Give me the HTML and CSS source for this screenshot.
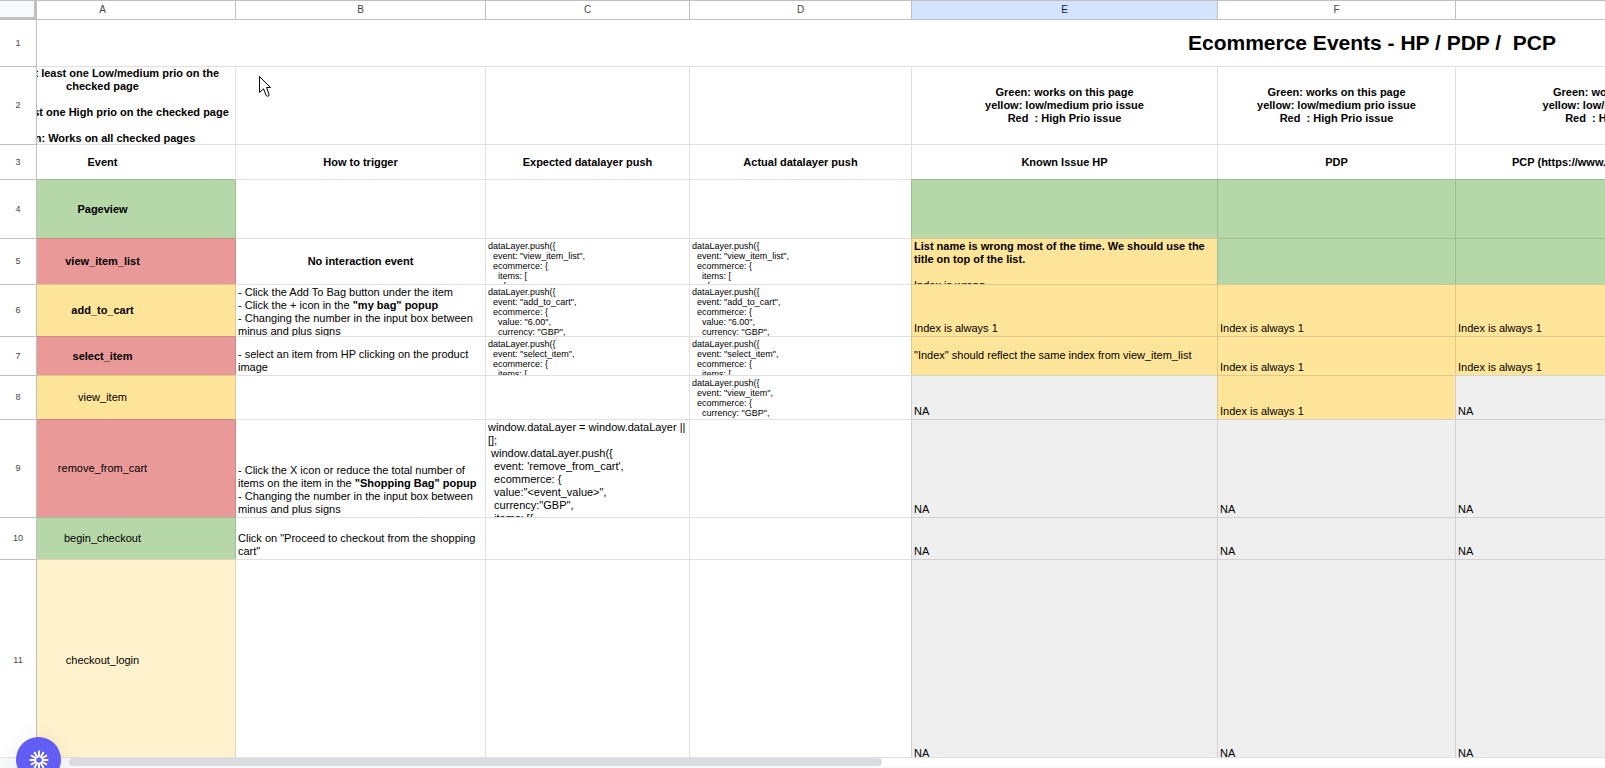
FILE: index.html
```html
<!DOCTYPE html>
<html lang="en">
<head>
<meta charset="utf-8">
<title>Ecommerce Events</title>
<link rel="stylesheet" href="styles.css">
</head>
<body>
<main class="app">
  <div class="viewport">
    <table class="sheet">
      <colgroup>
        <col class="w-num"><col class="w-a"><col class="w-b"><col class="w-c"><col class="w-d"><col class="w-e"><col class="w-f"><col>
      </colgroup>
      <thead>
        <tr>
          <td class="corner"></td>
          <th scope="col"><div class="cell scrolled">A</div></th>
          <th scope="col"><div class="cell">B</div></th>
          <th scope="col"><div class="cell">C</div></th>
          <th scope="col"><div class="cell">D</div></th>
          <th scope="col" class="selected"><div class="cell">E</div></th>
          <th scope="col"><div class="cell">F</div></th>
          <th scope="col"></th>
        </tr>
      </thead>
      <tbody>
        <tr class="r1">
          <th scope="row">1</th>
          <td colspan="7"><div class="cell merged title">Ecommerce Events - HP / PDP / &nbsp;PCP</div></td>
        </tr>
        <tr class="r2">
          <th scope="row">2</th>
          <td><div class="cell scrolled center bold">Yellow: At least one Low/medium prio on the<br>checked page<br><br>Red: At least one High prio on the checked page<br><br>Green: Works on all checked pages</div></td>
          <td></td><td></td><td></td>
          <td><div class="cell center bold">Green: works on this page<br>yellow: low/medium prio issue<br>Red &nbsp;: High Prio issue</div></td>
          <td><div class="cell center bold">Green: works on this page<br>yellow: low/medium prio issue<br>Red &nbsp;: High Prio issue</div></td>
          <td><div class="cell wide center bold">Green: works on this page<br>yellow: low/medium prio issue<br>Red &nbsp;: High Prio issue</div></td>
        </tr>
        <tr class="r3">
          <th scope="row">3</th>
          <td><div class="cell scrolled center bold">Event</div></td>
          <td><div class="cell center bold">How to trigger</div></td>
          <td><div class="cell center bold">Expected datalayer push</div></td>
          <td><div class="cell center bold">Actual datalayer push</div></td>
          <td><div class="cell center bold">Known Issue HP</div></td>
          <td><div class="cell center bold">PDP</div></td>
          <td><div class="cell from-left bold">PCP (https://www.</div></td>
        </tr>
        <tr class="r4">
          <th scope="row">4</th>
          <td class="green"><div class="cell scrolled center bold">Pageview</div></td>
          <td class="by-green"></td><td></td><td></td>
          <td class="green"></td><td class="green"></td><td class="green"></td>
        </tr>
        <tr class="r5">
          <th scope="row">5</th>
          <td class="red"><div class="cell scrolled center bold">view_item_list</div></td>
          <td class="by-red"><div class="cell center bold">No interaction event</div></td>
          <td><pre class="cell top code">dataLayer.push({
  event: "view_item_list",
  ecommerce: {
    items: [
      {</pre></td>
          <td><pre class="cell top code">dataLayer.push({
  event: "view_item_list",
  ecommerce: {
    items: [
      {</pre></td>
          <td class="yellow"><div class="cell top"><div><b>List name is wrong most of the time. We should use the title on top of the list.</b><br><br>Index is wrong</div></div></td>
          <td class="green"></td><td class="green"></td>
        </tr>
        <tr class="r6">
          <th scope="row">6</th>
          <td class="yellow"><div class="cell scrolled center bold">add_to_cart</div></td>
          <td class="by-yellow"><div class="cell top"><div>- Click the Add To Bag button under the item<br>- Click the + icon in the <b>"my bag" popup</b><br>- Changing the number in the input box between minus and plus signs</div></div></td>
          <td><pre class="cell top code">dataLayer.push({
  event: "add_to_cart",
  ecommerce: {
    value: "6.00",
    currency: "GBP",</pre></td>
          <td><pre class="cell top code">dataLayer.push({
  event: "add_to_cart",
  ecommerce: {
    value: "6.00",
    currency: "GBP",</pre></td>
          <td class="yellow"><div class="cell">Index is always 1</div></td>
          <td class="yellow"><div class="cell">Index is always 1</div></td>
          <td class="yellow"><div class="cell">Index is always 1</div></td>
        </tr>
        <tr class="r7">
          <th scope="row">7</th>
          <td class="red"><div class="cell scrolled center bold">select_item</div></td>
          <td class="by-red"><div class="cell">- select an item from HP clicking on the product image</div></td>
          <td><pre class="cell top code">dataLayer.push({
  event: "select_item",
  ecommerce: {
    items: [</pre></td>
          <td><pre class="cell top code">dataLayer.push({
  event: "select_item",
  ecommerce: {
    items: [</pre></td>
          <td class="yellow"><div class="cell middle">"Index" should reflect the same index from view_item_list</div></td>
          <td class="yellow"><div class="cell">Index is always 1</div></td>
          <td class="yellow"><div class="cell">Index is always 1</div></td>
        </tr>
        <tr class="r8">
          <th scope="row">8</th>
          <td class="yellow"><div class="cell scrolled center">view_item</div></td>
          <td class="by-yellow"></td><td></td>
          <td><pre class="cell top code">dataLayer.push({
  event: "view_item",
  ecommerce: {
    currency: "GBP",</pre></td>
          <td class="grey"><div class="cell">NA</div></td>
          <td class="yellow"><div class="cell">Index is always 1</div></td>
          <td class="grey"><div class="cell">NA</div></td>
        </tr>
        <tr class="r9">
          <th scope="row">9</th>
          <td class="red"><div class="cell scrolled center">remove_from_cart</div></td>
          <td class="by-red"><div class="cell"><div>- Click the X icon or reduce the total number of items on the item in the <b>"Shopping Bag" popup</b><br>- Changing the number in the input box between minus and plus signs</div></div></td>
          <td><pre class="cell top">window.dataLayer = window.dataLayer ||
[];
 window.dataLayer.push({
  event: 'remove_from_cart',
  ecommerce: {
  value:"&lt;event_value&gt;",
  currency:"GBP",
  items: [{</pre></td>
          <td></td>
          <td class="grey"><div class="cell">NA</div></td>
          <td class="grey"><div class="cell">NA</div></td>
          <td class="grey"><div class="cell">NA</div></td>
        </tr>
        <tr class="r10">
          <th scope="row">10</th>
          <td class="green"><div class="cell scrolled center">begin_checkout</div></td>
          <td class="by-green"><div class="cell">Click on "Proceed to checkout from the shopping cart"</div></td>
          <td></td><td></td>
          <td class="grey"><div class="cell">NA</div></td>
          <td class="grey"><div class="cell">NA</div></td>
          <td class="grey"><div class="cell">NA</div></td>
        </tr>
        <tr class="r11">
          <th scope="row">11</th>
          <td class="cream"><div class="cell scrolled center">checkout_login</div></td>
          <td class="by-cream"></td><td></td><td></td>
          <td class="grey"><div class="cell">NA</div></td>
          <td class="grey"><div class="cell">NA</div></td>
          <td class="grey"><div class="cell">NA</div></td>
        </tr>
      </tbody>
    </table>
  </div>
  <div class="scrollbar"><div class="gutter"></div><div class="thumb"></div></div>
  <button class="recorder" type="button" aria-label="Record">
    <svg width="20" height="20" viewBox="-10 -10 20 20" aria-hidden="true">
      <g stroke="#fff" stroke-width="1.9" stroke-linecap="butt">
        <path d="M0-3.2V-9.4M0 3.2V9.4M-3.2 0H-9.4M3.2 0H9.4M1.6-2.8L4.7-8.1M2.8-1.6L8.1-4.7M2.8 1.6L8.1 4.7M1.6 2.8L4.7 8.1M-1.6 2.8L-4.7 8.1M-2.8 1.6L-8.1 4.7M-2.8-1.6L-8.1-4.7M-1.6-2.8L-4.7-8.1"/>
      </g>
      <circle r="3.6" fill="none" stroke="#fff" stroke-width="1.6"/>
    </svg>
  </button>
  <svg class="pointer" width="13" height="22" viewBox="0 0 13 22" aria-hidden="true">
    <path d="M.5.5V16.5L4.5 12.8L7.3 19.6Q8.5 21 10 19.6V18.4L7.5 11.5H11.5Z" fill="#fff" stroke="#000"/>
  </svg>
</main>
</body>
</html>
```

FILE: styles.css
```css
* {
  box-sizing: border-box;
}

body {
  margin: 0;
  background: #fff;
  color: #000;
  font: 11px/13px "Liberation Sans", Arial, sans-serif;
}

.app {
  position: relative;
  display: flex;
  flex-direction: column;
  height: 100vh;
  overflow: hidden;
}

.viewport {
  flex: 1;
  min-height: 0;
  overflow: hidden;
}

/* Grid */
.sheet {
  width: 100%;
  table-layout: fixed;
  border-collapse: separate;
  border-spacing: 0;
}

.w-num { width: 37px; }
.w-a { width: 198px; }
.w-b { width: 250px; }
.w-c { width: 204px; }
.w-d { width: 222px; }
.w-e { width: 306px; }
.w-f { width: 238px; }

.sheet td,
.sheet th {
  padding: 0;
  overflow: hidden;
}

.sheet td {
  border-top: 1px solid rgba(0, 0, 0, 0.12);
  border-left: 1px solid rgba(0, 0, 0, 0.12);
}

.sheet tbody td:nth-child(2) {
  border-left: 0;
}

.sheet thead th {
  height: 20px;
  border: solid #c0c0c0;
  border-width: 1px 0 1px 1px;
  color: #444;
  font-size: 10px;
  font-weight: 400;
  line-height: 18px;
}

.sheet thead th:nth-child(2) {
  border-left: 0;
}

.sheet thead .cell {
  display: block;
  height: 18px;
  padding: 0;
  text-align: center;
}

.sheet thead .selected {
  background: #d3e3fd;
  color: #041e49;
}

.sheet .corner {
  background: #f8f9fa;
  border: solid #c0c0c0;
  border-width: 1px 3px 3px 0;
}

.sheet tbody th {
  border: solid #c0c0c0;
  border-width: 1px 1px 0 0;
  color: #444;
  font-size: 9px;
  font-weight: 400;
  text-align: center;
}

.sheet .r1 td,
.sheet .r1 th {
  border-top: 0;
}

/* Row heights */
.r1 { --row: 46px; }
.r2 { --row: 77px; }
.r3 { --row: 34px; }
.r4 { --row: 58px; }
.r5 { --row: 45px; }
.r6 { --row: 51px; }
.r7 { --row: 38px; }
.r8 { --row: 43px; }
.r9 { --row: 97px; }
.r10 { --row: 41px; }
.r11 { --row: 201px; }

.sheet tbody tr {
  height: calc(var(--row) + 1px);
}

.sheet .r1 {
  height: var(--row);
}

/* Cell contents */
.cell {
  display: flex;
  align-items: flex-end;
  height: var(--row);
  margin: 0;
  padding: 0 2px 1px;
  overflow: hidden;
  font-family: inherit;
}

.top {
  align-items: flex-start;
  padding-top: 1px;
  padding-bottom: 0;
}

.middle {
  align-items: center;
}

.center {
  align-items: center;
  justify-content: center;
  padding-bottom: 0;
  text-align: center;
  white-space: nowrap;
}

.bold {
  font-weight: 700;
}

.code {
  padding-top: 2px;
  font-size: 9px;
  line-height: 10px;
}

/* Column A is partly scrolled under the row numbers */
.scrolled {
  width: 265px;
  margin-left: -67px;
}

.merged {
  width: 2804px;
  margin-left: -67px;
}

.wide {
  width: 332px;
}

.from-left {
  align-items: center;
  padding: 0 0 0 56px;
  white-space: nowrap;
}

.title {
  align-items: center;
  justify-content: center;
  font-size: 21px;
  font-weight: 700;
  line-height: 26px;
}

/* Fills */
.green { background: #b6d7a8; }
.red { background: #ea9999; }
.yellow { background: #ffe599; }
.cream { background: #fff2cc; }
.grey { background: #efefef; }

.sheet .by-green { border-left-color: #a0bd94; }
.sheet .by-red { border-left-color: #ce8787; }
.sheet .by-yellow { border-left-color: #e0ca87; }
.sheet .by-cream { border-left-color: #e0d5b4; }

/* Scrollbar */
.scrollbar {
  display: flex;
  height: 11px;
  background: #fff;
  border-top: 1px solid #e1e1e1;
  border-bottom: 2px solid #f8f9fa;
}

.gutter {
  width: 69px;
  background: #f8f9fa;
}

.thumb {
  width: 813px;
  height: 8px;
  border-radius: 4px;
  background: #dadce0;
}

/* Floating items */
.recorder {
  position: absolute;
  left: 16px;
  bottom: -14px;
  display: flex;
  align-items: center;
  justify-content: center;
  width: 45px;
  height: 45px;
  padding: 0;
  border: 0;
  border-radius: 50%;
  background: #625df5;
  box-shadow: 0 0 20px rgba(0, 0, 0, 0.08);
}

.pointer {
  position: absolute;
  left: 259px;
  top: 76px;
}
```
